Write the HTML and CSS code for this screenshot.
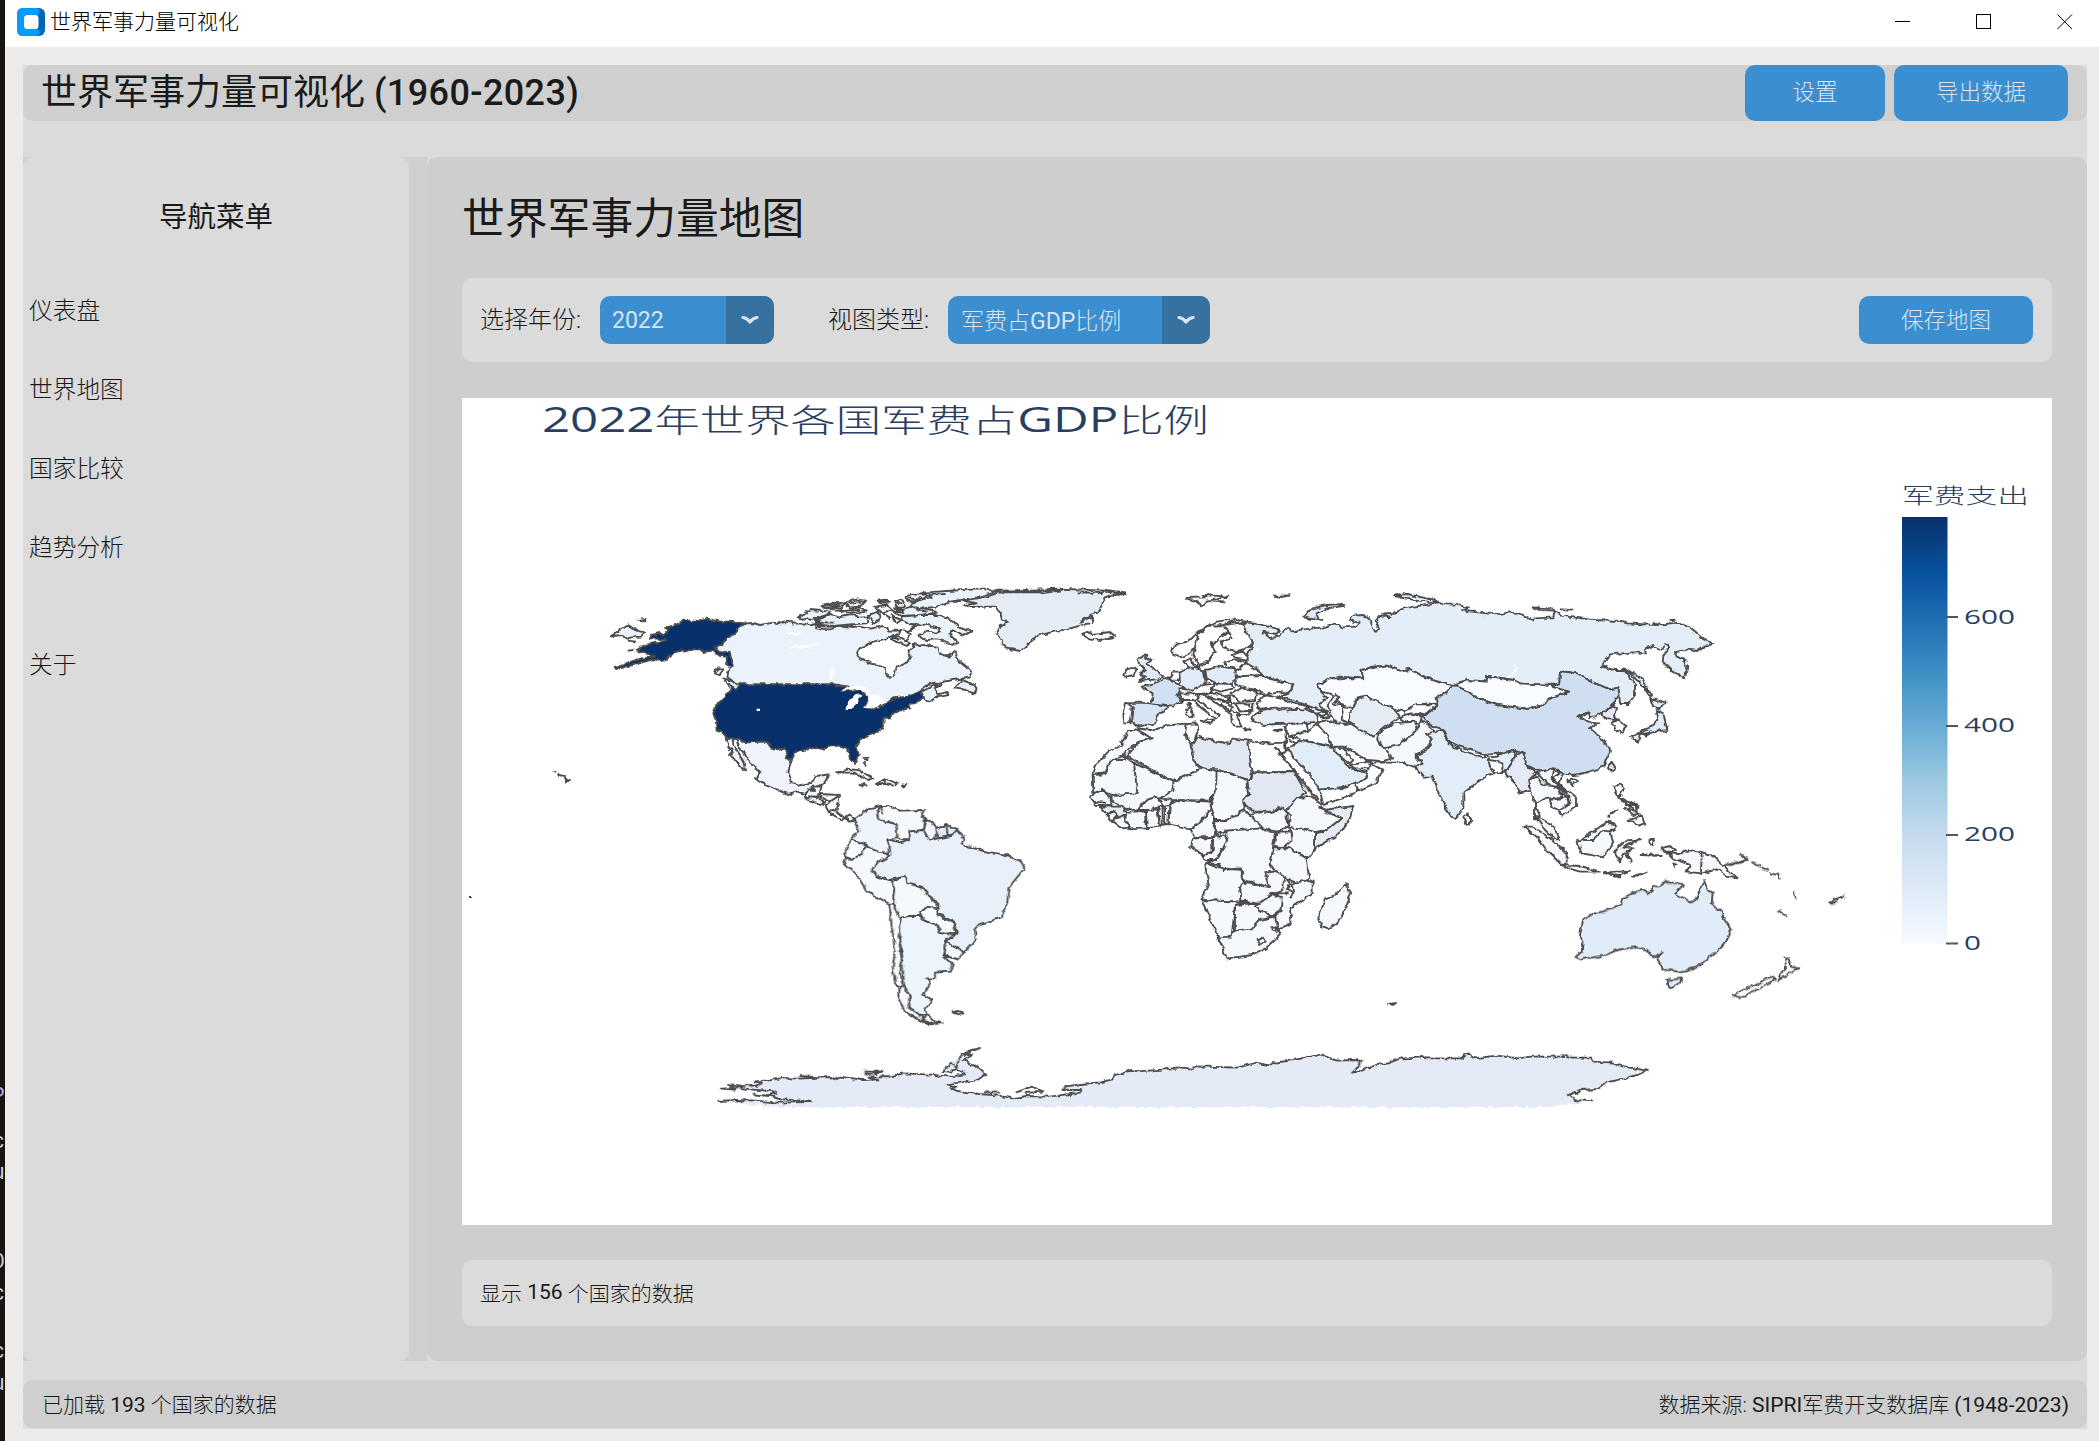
FILE: index.html
```html
<!DOCTYPE html>
<html lang="zh-CN">
<head>
<meta charset="utf-8">
<title>世界军事力量可视化</title>
<link rel="stylesheet" href="styles.css">
</head>
<body>
<div class="desktop">
  <div class="terminal" aria-hidden="true">
    <span class="frag f1">P</span><span class="frag f2">c</span><span class="frag f3">u</span><span class="frag f4">0</span><span class="frag f5">c</span><span class="frag f6">c</span><span class="frag f7">u</span>
  </div>
  <div class="window">
    <header class="titlebar">
      <svg class="app-icon" viewBox="0 0 28 28"><rect width="28" height="28" rx="6" fill="#0065b3"/><path d="M6 0H20Q23 1 22.500 5L21 6V22L23 24Q23 27 20 28H6Q0 28 0 22V6Q0 0 6 0Z" fill="#009dff"/><rect x="7" y="7" width="14.500" height="14" rx="3.500" fill="#fff"/></svg>
      <span class="window-title">世界军事力量可视化</span>
      <svg class="window-controls" viewBox="0 0 178 16" fill="none" stroke="#000" stroke-width="1"><path d="M0 7.500H15"/><rect x="81.500" y=".5" width="14" height="14"/><path d="M162.500 .5L177 15M177 .5L162.500 15"/></svg>
    </header>
    <div class="frame">
      <div class="topbar">
        <h1>世界军事力量可视化 <b>(1960-2023)</b></h1>
        <button class="btn btn-settings">设置</button>
        <button class="btn btn-export">导出数据</button>
      </div>
      <div class="main">
        <nav class="sidebar">
          <h2>导航菜单</h2>
          <a>仪表盘</a><a>世界地图</a><a>国家比较</a><a>趋势分析</a><a class="about">关于</a>
        </nav>
        <div class="content-wrap">
        <section class="content">
          <h2>世界军事力量地图</h2>
          <div class="controls">
            <label>选择年份:</label>
            <div class="select year"><span>2022</span><i><svg viewBox="0 0 18 12"><path d="M2 3.500Q6 4 9 8Q12 4 16 3.500" /></svg></i></div>
            <label class="second">视图类型:</label>
            <div class="select kind"><span>军费占<b>GDP</b>比例</span><i><svg viewBox="0 0 18 12"><path d="M2 3.500Q6 4 9 8Q12 4 16 3.500" /></svg></i></div>
            <button class="btn btn-save">保存地图</button>
          </div>
          <svg class="map" viewBox="462 398 1590 827">
            <defs>
              <linearGradient id="blues" x1="0" y1="0" x2="0" y2="1"><stop offset="0" stop-color="#08306b"/><stop offset=".125" stop-color="#08519c"/><stop offset=".25" stop-color="#2171b5"/><stop offset=".375" stop-color="#4292c6"/><stop offset=".5" stop-color="#6baed6"/><stop offset=".625" stop-color="#9ecae1"/><stop offset=".75" stop-color="#c6dbef"/><stop offset=".875" stop-color="#deebf7"/><stop offset="1" stop-color="#f7fbff"/></linearGradient>
              <filter id="coast" filterUnits="userSpaceOnUse" x="462" y="570" width="1590" height="560" color-interpolation-filters="sRGB"><feTurbulence type="fractalNoise" baseFrequency=".16" numOctaves="2" seed="4" result="n"/><feDisplacementMap in="SourceGraphic" in2="n" scale="5" xChannelSelector="R" yChannelSelector="G"/></filter>
            </defs>
            <rect x="462" y="398" width="1590" height="827" fill="#fff"/>
            <text class="chart-title" transform="translate(542 432) scale(1.410 1)" textLength="473" lengthAdjust="spacingAndGlyphs">2022<tspan class="han">年世界各国军费占</tspan>GDP<tspan class="han">比例</tspan></text>

            <g filter="url(#coast)">
            <!-- North America -->
            <g class="land" transform="translate(540 560) scale(.33333)">
              <path class="c-can" d="M615 190L640 189L660 195L700 188L720 190L740 185L760 191L790 190L810 196L828 192L825 205L870 208L900 199L940 204L960 200L990 206L1030 198L1050 212L1085 212L1072 222L1060 230L1030 238L1000 245L970 258L948 278L960 298L1000 312L1035 320L1036 340L1050 353L1065 343L1070 320L1100 308L1112 288L1105 275L1120 262L1118 252L1140 258L1165 252L1180 262L1195 262L1200 282L1225 290L1242 272L1255 300L1280 320L1297 338L1290 352L1240 360L1205 366L1160 376L1125 400L1150 392L1180 378L1205 373L1187 385L1190 403L1225 396L1222 406L1190 412L1165 427L1150 415L1145 400L1125 406L1105 412L1080 413L1055 420L1040 430L1010 432L975 447L960 405L925 380L885 373L597 373L590 388L580 375L562 350L568 325L578 316L568 275L545 278L525 268Z"/>
              <path class="c-usa" d="M615 190L525 268L545 278L568 275L575 300L578 318L562 316L560 290L540 288L518 272L490 276L480 268L460 268L435 278L430 270L400 278L385 288L380 298L365 303L340 297L290 312L228 327L224 321L290 300L345 287L325 282L300 278L290 268L315 255L350 248L378 237L330 235L335 225L360 219L370 226L385 212L378 202L410 194L430 182L480 181L500 176L540 184L580 186Z"/>
              <path class="c-usa" d="M597 373L885 373L890 378L925 380L905 394L945 388L970 398L987 410L975 440L1000 447L1040 430L1060 415L1105 410L1120 404L1140 390L1152 412L1130 428L1108 432L1111 445L1065 455L1050 472L1030 476L1032 500L1015 515L985 528L955 543L950 560L957 590L945 609L930 598L924 565L900 557L865 560L850 569L830 562L800 568L765 578L755 600L740 592L734 565L712 571L695 565L680 545L625 547L595 538L560 533L550 520L530 512L527 480L520 460L530 435L550 415L572 395L575 380Z"/>
              <path class="lake" d="M900 394Q940 368 985 385L990 397L960 395L945 388ZM920 447Q925 405 960 403L970 406Q948 420 940 447ZM975 398L1020 408L1030 425L1045 425L1000 445L972 445L988 425ZM728 222L790 216L770 228ZM742 262L840 248L780 268ZM862 330L885 325L878 362ZM785 283L825 279L800 285ZM855 300L870 290L862 301ZM650 446H660V454H650Z"/>
              <path class="c-can" d="M211 230L265 195L290 212L315 218L300 230L270 233L260 238L245 225ZM295 180L320 176L315 181ZM265 242L290 245ZM265 272L280 270M525 340L535 325L548 325L540 345ZM550 355L575 362L597 380L590 388L570 375ZM1240 385L1265 360L1300 372L1310 385L1303 400L1280 390ZM1165 372L1190 367"/>
              <path class="c-can" d="M773 173L810 150L870 155L860 165L815 180ZM825 180L870 165L900 172L930 165L960 170L985 168L980 190L930 193L880 198L825 193L850 188ZM845 140L880 128L915 130L900 145L860 145ZM915 128L950 118L975 122L960 140L930 142ZM890 152L960 145L980 155L940 160ZM985 165L1015 155L1020 180L1000 192ZM1010 122L1045 118L1050 128L1020 130ZM1005 140L1040 135L1060 150L1025 158ZM1065 125L1085 118L1095 140L1075 145ZM1060 155L1120 142L1180 150L1190 158L1140 165L1085 168ZM1095 112L1115 104L1160 103L1175 112L1130 122L1110 125ZM1125 125L1160 110L1150 98L1220 93L1310 88L1385 92L1310 112L1230 125L1190 140L1150 145L1110 140ZM1055 168L1070 190L1085 180ZM1085 170L1140 165L1200 165L1245 185L1255 200L1297 213L1270 228L1240 212L1225 222L1255 245L1240 258L1215 245L1190 238L1160 240L1135 228L1155 215L1195 218L1200 205L1165 195L1110 192L1090 182ZM1050 238L1075 228L1110 248L1100 258L1070 245Z"/>
              <path fill="none" d="M1110 212L1140 192M1100 215L1130 190M850 136L905 134M858 142L895 140M925 130L965 125M900 150L960 152M825 186L880 188M830 198L890 201L940 198M880 132L900 138M1015 126L1045 124M1020 150L1035 165M1030 162L1050 175M1070 128L1085 130M1070 135L1088 155M1060 140L1080 150M1060 150L1090 160M1130 150L1160 155M1100 115L1140 118M1160 105L1220 102M1090 210L1110 220L1100 240M1055 232L1085 240"/>
              <path class="c-gre" d="M1560 92L1505 100L1500 96L1380 97L1340 110L1270 122L1310 130L1275 135L1290 141L1365 140L1382 160L1385 175L1405 188L1380 195L1370 215L1385 250L1400 265L1440 273L1460 255L1485 230L1530 218L1590 205L1655 188L1660 180L1620 185L1645 170L1680 152L1690 120L1694 112L1756 100L1690 92L1560 86L1390 92Z"/>
              <path class="c-mex" d="M560 533L595 538L603 545L625 547L680 545L695 565L712 571L734 565L740 592L755 600L745 635L755 665L780 676L815 668L827 648L868 643L860 660L845 675L828 680L810 690L795 702L770 694L745 702L715 692L680 677L650 658L658 640L640 615L620 600L608 575L598 565L590 542L578 538L580 555L600 585L610 605L615 628L600 622L590 602L570 585L580 575L565 560Z"/>
              <path d="M795 710L805 688L825 690L815 680L845 680L840 700L830 715ZM835 702L900 705L870 725L845 712ZM795 712L835 712L855 728L850 735L800 718ZM858 738L880 718L900 706L890 752L865 750ZM862 752L890 755L915 775L905 778L870 760ZM915 775L930 766L950 775L970 765L975 780L945 775L930 782Z"/>
              <path d="M888 638L930 627L960 632L1000 655L985 660L940 638ZM1005 672L1040 657L1070 670L1060 677L1035 672ZM958 675L980 676L970 681ZM1035 660L1040 675M1085 673L1102 675L1090 679ZM968 593L988 594M970 606L978 616M972 600L985 600"/>
              <path class="c-usa" d="M40 637L50 637M55 643L70 648M66 646L78 656M75 656L90 662L78 668Z"/>
            </g>

            <!-- South America -->
            <g class="land" transform="translate(800 760) scale(.33333)">
              <path class="c-col" d="M160 180L180 165L205 145L245 138L230 155L235 180L290 192L292 235L265 238L268 290L230 275L200 255L155 238L178 212Z"/>
              <path class="c-per" d="M245 138L265 138L300 152L372 150L365 168L378 175L370 210L325 215L328 238L292 235L290 192L235 180L232 158ZM372 175L410 200L405 235L388 242L370 210L378 190Z"/>
              <path d="M155 238L200 255L185 282L155 300L135 290L140 260ZM240 135L250 160"/>
              <path class="c-per" d="M135 293L155 300L185 282L202 258L230 275L262 278L265 295L235 305L215 330L235 350L270 360L280 370L280 430L268 432L200 392L170 345L130 305Z"/>
              <path class="c-aus" d="M405 205L440 195L475 208L490 238L455 228L415 235ZM440 198L443 230"/>
              <path class="c-bra" d="M268 290L265 238L300 247L328 240L325 215L370 210L388 242L415 235L455 228L470 210L495 240L485 250L510 262L560 275L610 283L660 302L673 325L645 360L625 385L622 430L605 472L540 492L525 510L527 540L492 578L440 545L470 515L465 488L430 470L412 460L415 432L380 405L378 388L325 370L315 350L270 360L235 350L215 330L235 305Z"/>
              <path class="c-per" d="M275 360L315 350L325 370L378 388L380 405L412 430L412 445L375 445L360 468L320 472L302 475L280 430L285 395Z"/>
              <path d="M360 455L380 440L410 445L415 468L460 490L468 518L440 525L415 518L420 500L365 475Z"/>
              <path class="c-arg" d="M302 475L320 468L360 468L365 475L420 500L415 518L440 525L468 518L437 545L430 585L458 612L450 632L405 635L405 655L380 655L392 670L370 705L395 718L375 750L385 765L355 765L325 740L330 710L312 675L305 570L298 545L300 500Z"/>
              <path d="M437 545L492 578L470 597L430 585ZM268 432L280 430L302 475L300 500L298 545L305 600L300 640L312 675L328 710L325 740L355 762L375 780L400 790L355 780L315 755L295 715L295 680L285 670L278 620L285 570L275 500ZM365 775L385 765L405 785L425 790L390 793L345 775L325 762M288 675L310 680L300 690"/>
              <path d="M458 758L475 753L490 757L475 763Z"/>
            </g>

            <!-- Europe and Africa -->
            <g class="land" transform="translate(1060 560) scale(.33333)">
              <path class="c-none" d="M70 222L85 216L100 222L150 216L165 228L120 243L85 238ZM375 114L440 112L430 105L505 110L470 118L440 122L425 136L400 122ZM455 125L493 127M640 107L690 106L665 111ZM1000 108L1020 102"/>
              <path class="c-none" d="M130 95L195 101L140 108M50 97L130 99M65 182L100 170L95 190"/>
              <path class="c-aus" d="M730 172L755 145L800 135L850 132L852 138L800 145L770 160L775 178L790 183Z"/>
              <path class="c-none" d="M335 265L350 252L385 245L420 212L470 185L520 178L560 185L545 192L520 185L490 195L440 198L415 225L405 262L390 280L360 292L340 285ZM405 262L415 225L440 198L490 195L505 215L480 235L455 250L465 275L440 308L415 315L400 285ZM490 195L540 188L560 205L580 250L560 265L530 275L490 262L485 245L515 235L505 215Z"/>
              <path class="c-none" d="M370 305L395 295L400 315L420 322L390 325ZM515 285L545 275L565 285L560 300L525 292ZM495 305L520 298L560 305L550 318L530 330L500 320ZM520 345L545 315L580 312L610 345L570 350Z"/>
              <path class="c-aus" d="M240 290L262 285L258 295L272 303L260 312L285 330L308 350L290 358L238 363L258 350L240 345L258 330L240 315L232 300Z"/>
              <path class="c-none" d="M190 345L195 330L225 320L232 330L222 345L195 350ZM325 355L340 335L360 335L355 360L335 358Z"/>
              <path class="c-aus" d="M358 335L390 322L430 330L440 365L425 385L380 390L360 372ZM435 330L480 320L525 325L528 355L515 372L465 368L440 355Z"/>
              <path class="c-fra" d="M245 380L275 375L300 362L320 355L368 378L360 395L352 410L370 425L340 437L275 430L278 400Z"/>
              <path class="c-esp" d="M195 430L240 428L275 430L330 440L295 465L285 490L235 500L212 480L218 440Z"/>
              <path class="c-none" d="M195 430L218 440L212 490L190 490L187 465ZM355 400L400 400L420 410L410 420L440 440L480 465L465 475L425 445L400 420L365 420ZM425 482L460 478L450 492ZM378 450L395 445L398 468L382 470ZM382 432L390 432L388 445ZM355 385L395 390L430 375L465 370L455 398L420 402L360 400ZM465 370L515 372L520 385L480 395L455 385ZM430 405L470 400L510 410L515 445L490 440L460 425ZM445 410L485 440L510 465L525 500L545 500L530 465L560 465L580 450L560 430L520 430ZM510 400L550 382L590 395L585 420L540 425ZM530 350L600 345L645 360L700 375L690 395L650 415L610 400L590 390L545 382L525 372ZM525 430L580 430L580 452L540 455ZM548 507L575 510M640 510L665 508L655 514Z"/>
              <path class="c-none" d="M490 408L510 418L500 432L520 445M470 415L500 425M480 430L510 455L520 440M515 450L540 462M590 400L610 403L640 400L680 395M645 415L690 402"/>
              <path class="c-gre" d="M575 470L600 455L640 445L680 452L730 445L765 460L775 485L720 490L650 492L610 495L580 480Z"/>
              <path class="c-none" d="M590 430L610 405L650 412L700 430L750 440L730 448L650 442L600 450ZM730 432L780 445L800 460L790 472L765 460L750 448ZM765 462L800 455L810 470L790 475Z"/>
              <path class="c-per" d="M185 548L205 515L235 505L272 510L275 535L240 545L200 570L190 590L165 595L155 615L128 640L98 645L110 610L145 575L185 555Z"/>
              <path class="c-per" d="M225 505L272 510L310 498L380 490L395 495L375 520L395 545L400 600L425 625L340 665L200 588L240 545L275 535Z"/>
              <path class="c-none" d="M380 492L410 490L412 520L395 555L375 520Z"/>
              <path class="c-lib" d="M395 555L412 530L450 540L510 552L515 535L565 542L575 635L565 665L470 628L425 625L400 600Z"/>
              <path class="c-none" d="M565 542L620 550L675 548L678 575L665 580L645 562L705 635L575 637Z"/>
              <path class="c-per" d="M98 645L135 643L155 600L195 600L195 590L222 610L232 700L155 705L125 690L100 700ZM222 608L340 665L340 690L300 715L260 720L230 750L190 745L155 720L155 705L232 700ZM340 665L425 625L470 630L468 690L450 722L340 720L300 715L340 690ZM470 628L565 660L568 705L550 720L555 750L500 780L465 780L450 740L468 690Z"/>
              <path class="c-lib" d="M575 637L705 637L740 700L710 715L680 750L655 740L640 755L580 755L550 730L550 715L568 705L562 665L575 655Z"/>
              <path class="c-per" d="M90 710L125 690L150 710L155 735L105 735ZM98 725L135 728M230 750L260 720L290 710L310 735L270 750Z"/>
              <path class="c-gre" d="M120 740L190 740L200 765L180 775L160 755L140 762Z"/>
              <path class="c-per" d="M140 765L155 755L170 770L155 785ZM165 780L190 765L210 805L190 808L155 785ZM200 755L255 755L258 805L210 808L195 780ZM258 750L292 748L300 800L260 805ZM330 730L350 720L450 725L455 745L425 780L395 808L370 805L325 792Z"/>
              <path class="c-gre" d="M295 740L328 735L325 792L300 795ZM308 740V795M315 740V795"/>
              <path class="c-per" d="M455 745L465 780L460 800L475 830L405 832L392 808L430 780ZM465 785L500 780L555 750L570 765L610 805L550 810L500 812L465 825ZM570 765L610 755L640 758L670 740L690 770L685 800L650 815L610 805ZM680 750L710 715L755 710L790 735L775 745L845 775L800 810L740 820L690 800L680 775Z"/>
              <path class="c-gre" d="M775 740L790 750L880 738L870 775L840 820L765 865L765 820L800 810L845 775Z"/>
              <path class="c-per" d="M400 835L455 835L458 875L430 885L390 860ZM460 832L500 825L495 860L470 900L435 900L425 885L458 875ZM500 812L610 805L645 820L635 890L632 915L645 935L620 938L620 970L632 982L550 960L545 930L490 925L435 910L470 898L495 860ZM435 910L480 912L490 930L540 925L548 965L570 965L565 980L540 982L545 1025L425 1020L445 970ZM650 815L690 815L695 840L670 865L640 860ZM690 800L765 815L765 870L745 895L690 865L670 862L695 840ZM640 865L690 865L740 895L748 960L715 970L675 955L645 935L632 910Z"/>
              <path class="c-per" d="M548 968L632 982L620 970L620 938L645 935L672 945L670 990L635 1000L600 1028L545 1022L540 985ZM600 1028L635 1005L668 1015L665 1050L635 1070L585 1040ZM748 960L758 965L758 1000L690 1045L695 1090L655 1105L645 1070L665 1050L668 1015L640 1000L700 1000L695 970ZM425 1020L540 1025L600 1028L525 1035L515 1130L475 1132L440 1055ZM525 1032L580 1025L585 1040L635 1072L600 1080L575 1105L525 1112ZM475 1132L515 1130L525 1112L575 1105L600 1080L645 1070L655 1105L660 1125L620 1165L580 1185L500 1195L488 1165ZM590 1142L605 1133L618 1142L600 1155ZM635 1105L650 1102L650 1120Z"/>
              <path class="c-per" d="M670 945L690 970L680 990L700 1000L690 1015M775 1075L795 1015L825 1005L860 970L872 1005L835 1090L805 1105L785 1098Z"/>
              <path class="c-none" d="M680 492L740 490L745 510L690 530L680 515ZM675 530L690 540L708 550L680 575ZM690 530L745 512L775 485L800 520L815 560L725 540Z"/>
              <path class="c-ind" d="M685 565L725 540L770 550L825 565L850 600L870 625L920 635L915 660L840 685L780 690L755 650L705 600Z"/>
              <path class="c-none" d="M780 688L840 685L885 670L895 690L860 710L790 735ZM885 670L915 660L930 610L970 630L945 670L895 692ZM815 562L850 565L880 600L870 610L830 580ZM870 615L930 605L925 625L880 625Z"/>
              <path class="c-per" d="M770 490L800 480L830 490L880 490L950 495L960 540L1000 575L985 605L920 600L850 560L820 560L800 525Z"/>
              <path fill="none" d="M675 500L680 570M645 562L705 635L755 700L790 735"/>
            </g>

            <!-- Asia -->
            <g class="land" transform="translate(1380 570) scale(.33333)">
              <path class="c-rus" d="M-410 165L-400 158L-360 163L-300 178L-310 192L-350 186L-330 204L-305 200L-275 170L-265 184L-230 178L-170 172L-135 160L-115 172L-70 170L-60 160L-90 148L-75 133L-50 132L-30 150L-15 188L-5 175L-15 155L0 138L30 142L10 130L50 128L60 118L100 110L160 102L175 95L200 103L230 104L270 114L250 122L320 130L350 133L390 127L430 137L460 152L465 145L520 142L525 122L545 137L640 150L720 153L740 160L830 165L890 158L930 172L970 204L960 203L1000 222L975 227L950 243L920 238L885 247L890 260L915 270L922 290L915 325L880 305L848 275L850 255L868 232L855 222L848 240L820 228L798 235L800 250L760 247L690 253L665 288L700 300L735 300L765 340L765 375L745 402L720 402L718 370L715 352L690 358L640 338L590 310L540 303L538 340L510 345L420 340L400 330L322 318L320 335L260 330L222 345L180 338L130 320L90 297L60 302L20 287L-20 290L-55 300L-50 325L-120 320L-150 325L-188 345L-180 365L-160 385L-180 400L-170 425L-235 400L-300 380L-275 370L-260 345L-330 325L-360 310L-365 300L-400 280L-400 260L-380 220L-400 190Z"/>
              <path class="lake" d="M-378 240L-360 235L-372 245ZM-345 225L-330 235ZM380 320Q405 315 405 285Q425 305 385 325Z"/>
              <path class="c-rus" d="M42 78L80 72L165 90L175 98L110 92ZM460 112L520 115L525 122L480 120ZM540 118L580 119M872 150L886 149M820 158L835 165M735 295L790 330L803 350L790 350L760 320Z"/>
              <path class="c-kaz" d="M-188 345L-150 325L-50 325L-55 300L20 287L60 302L90 297L130 320L180 338L222 345L200 365L170 385L180 400L110 402L70 425L40 415L0 398L-40 380L-70 385L-80 415L-120 405L-150 370L-180 365Z"/>
              <path class="c-gre" d="M-90 430L-80 415L-70 388L-40 380L0 398L40 415L60 440L10 475L-20 500L-60 480L-95 455Z"/>
              <path class="c-kaz" d="M70 425L110 402L175 403L130 435L100 430L75 435ZM60 445L95 430L125 440L120 462L75 455ZM-140 400L-110 410L-115 450L-90 462L-130 460L-160 410L-135 375L-120 380Z"/>
              <path class="c-per" d="M-5 490L40 460L105 455L110 480L60 525L10 535L-5 510ZM10 535L60 525L110 480L125 450L165 485L155 515L110 560L130 590L100 590L70 578L-15 578L40 565Z"/>
              <path class="c-kaz" d="M222 345L260 330L320 335L322 318L400 330L420 340L510 345L520 350L565 365L500 390L490 405L445 417L350 405L290 383L265 365Z"/>
              <path class="c-chn" d="M130 440L175 405L170 385L222 345L265 365L290 383L350 405L445 417L490 405L500 390L568 365L515 350L538 340L540 303L590 310L640 338L690 358L715 352L718 375L700 400L665 430L630 445L628 425L595 440L625 458L655 460L630 475L670 510L690 540L670 590L620 608L580 615L550 610L520 595L480 605L440 585L430 550L395 540L350 555L315 552L260 540L220 520L200 510L190 480L150 465Z"/>
              <path class="c-chn" d="M565 632L580 625L593 632L580 645ZM683 590L695 575L706 592L698 607Z"/>
              <path class="c-ind" d="M165 485L190 480L200 510L225 535L315 555L350 555L400 540L410 552L385 590L375 605L345 610L320 615L250 670L250 715L228 747L210 735L180 680L155 620L130 620L105 590L130 585L110 555L135 545L158 510L140 490Z"/>
              <path class="c-none" d="M220 530L240 530L315 552L315 562L270 552ZM320 552L350 548L355 560L325 562ZM325 568L370 580L370 605L345 610L330 590ZM250 740L265 730L277 752L262 767Z"/>
              <path class="c-mya" d="M410 552L430 550L440 585L470 610L445 630L450 660L415 668L405 640L375 610L385 590Z"/>
              <path class="c-per" d="M445 630L470 620L490 645L535 650L545 680L510 685L480 690L465 700L480 740L465 745L465 700L450 660ZM470 608L520 595L540 610L515 625L560 665L560 685L535 655L500 640ZM520 595L550 610L535 640L588 680L588 710L545 740L535 720L565 705L565 680L530 640L515 620ZM510 690L560 682L570 700L535 720L515 710Z"/>
              <path class="c-per" d="M465 740L490 750L520 770L540 808L525 808L495 780ZM433 770L460 770L510 805L560 850L560 880L545 885L500 840L470 800ZM550 885L600 888L660 905L600 905L555 892ZM592 812L605 810L660 770L685 755L710 770L690 785L700 815L670 862L605 850ZM605 810L640 810L670 782L690 785M715 830L730 815L780 810L750 822L730 830L760 835L740 845L755 875L735 850L730 850L720 878L705 850Z"/>
              <path class="c-none" d="M675 910L700 905L750 905L720 915ZM755 920L800 906L770 920ZM700 915L720 920M785 855L845 858L815 853ZM805 810L822 810L815 830ZM880 880L890 884L883 890ZM683 740L710 715M703 648L725 643L730 660L718 680L705 670ZM715 680L775 710L770 725L730 695ZM735 715L780 730L760 735ZM740 750L765 745L785 735L793 760L775 767L760 755ZM730 690L760 700L745 720M735 705L765 705L775 720"/>
              <path class="c-per" d="M845 835L870 828L888 840L870 850ZM865 850L895 852L930 840L965 850L963 910L920 905L930 885L880 865ZM965 850L1000 858L1035 890L1070 925L1040 920L1010 898L963 912Z"/>
              <path class="c-mya" d="M668 430L700 405L712 412L705 435L710 450L685 448L670 440Z"/>
              <path class="c-none" d="M695 460L715 448L740 470L725 488L708 480Z"/>
              <path class="c-aus" d="M820 410L810 385L860 398L835 415ZM830 420L850 430L862 480L830 485L790 495L775 487L815 470L835 450ZM753 497L780 490L775 518L758 508ZM785 490L810 485L800 497ZM790 350L820 375L810 380Z"/>
            </g>

            <!-- Oceania -->
            <g class="land" transform="translate(1500 760) scale(.33333)">
              <path class="c-aus" d="M228 590L245 575L248 545L240 525L250 480L270 465L340 445L365 430L370 415L395 400L425 390L445 402L460 380L480 378L495 362L520 372L550 375L525 400L575 427L590 415L612 360L625 390L638 398L635 430L665 455L670 475L692 505L680 540L650 575L590 622L540 635L488 628L480 605L470 598L485 575L460 595L445 570L410 562L360 568L310 587L245 598ZM502 660L550 655L530 675L508 683Z"/>
              <path d="M855 592L868 600L870 620L898 625L870 640L835 660L840 640L858 625ZM698 705L740 685L815 650L825 658L780 685L720 712ZM675 315L720 305L742 292L725 310L695 315ZM718 280L745 300M757 306L780 318M785 322L810 330M810 340L835 345L840 358M880 395L890 413M833 450L862 470M990 430L1010 425L1000 433ZM1010 420L1035 408"/>
            </g>

            <!-- Antarctica -->
            <g class="land" transform="translate(700 1020) scale(.625 .33333)">
              <path class="ice" d="M28 243L90 242L178 246L125 237L87 224L120 221L105 212L35 206L90 195L92 182L130 174L200 172L260 180L285 178L268 165L330 162L400 168L420 160L395 145L402 130L425 95L448 84L425 105L425 125L458 160L440 182L400 193L410 212L445 222L500 235L550 228L608 218L580 205L610 192L660 178L680 155L740 145L850 140L895 128L910 135L950 120L995 103L1015 118L1058 122L1045 158L1080 135L1120 115L1215 115L1230 102L1245 113L1275 107L1310 115L1385 105L1425 113L1430 125L1475 135L1515 152L1500 165L1450 188L1440 207L1400 215L1390 230L1405 243L1430 244L1355 261H110Z"/>
              <path fill="none" d="M28 243L60 240L90 242L125 248L178 246L160 242L125 237L115 229L87 224L105 226L120 221L120 214L80 208L60 201L55 209L35 206L55 204L45 195L65 200L75 195L90 198L98 188L88 184L110 181L130 174L160 176L210 171L215 178L225 170L260 180L285 178L268 170L310 168L325 160L370 164L400 170L425 163L415 150L400 155L388 153L402 130L410 145L415 110L430 93L448 84L440 90L425 105L435 105L420 120L440 135L458 165L440 182L395 193L410 200L400 205L410 212L445 222L475 226L500 235L520 228L560 230L608 218L608 210L580 210L585 200L610 192L640 187L660 178L665 165L680 157L690 150L700 154L740 149L765 142L790 146L800 139L860 143L890 128L910 136L920 128L950 120L995 103L1005 114L1020 122L1045 120L1058 122L1055 138L1042 158L1055 155L1080 135L1100 130L1120 116L1150 113L1155 107L1160 115L1215 115L1230 100L1238 115L1275 107L1310 115L1330 110L1380 110L1387 102L1388 113L1425 113L1430 125L1460 128L1475 138L1515 152L1500 165L1450 188L1437 207L1410 210L1390 225L1400 240L1430 244M160 168L195 172M262 155L292 155L275 162L262 160M455 217L480 218M507 217L530 200L548 215L520 219"/>
            </g>
            <g class="land" transform="translate(462 398)"><path d="M7 499L11 499M926 606L934 605L931 607ZM1370 502L1382 499"/></g>
            </g>

            <text class="bar-title" x="1902" y="503" textLength="127" lengthAdjust="spacingAndGlyphs">军费支出</text>
            <rect x="1902" y="517" width="45.500" height="427" fill="url(#blues)"/>
            <path d="M1946 617H1958M1946 726H1958M1946 835H1958M1946 943.500H1958" stroke="#555" stroke-width="1.800"/>
            <g class="ticks">
              <text x="1964" y="624" textLength="51" lengthAdjust="spacingAndGlyphs">600</text>
              <text x="1964" y="732" textLength="51" lengthAdjust="spacingAndGlyphs">400</text>
              <text x="1964" y="841" textLength="51" lengthAdjust="spacingAndGlyphs">200</text>
              <text x="1964" y="950" textLength="17" lengthAdjust="spacingAndGlyphs">0</text>
            </g>
          </svg>
          <div class="info">显示 <b>156</b> 个国家的数据</div>
        </section>
        </div>
      </div>
      <footer class="status"><span>已加载 <b>193</b> 个国家的数据</span><span>数据来源: <b>SIPRI</b>军费开支数据库 <b>(1948-2023)</b></span></footer>
    </div>
  </div>
</div>
</body>
</html>
```
FILE: styles.css
```css
* { box-sizing: border-box; }
body { margin: 0; font-family: Roboto, "Noto Sans CJK SC", sans-serif; font-weight: 300; color: #1a1a1a; }
h1, h2 { margin: 0; font-weight: 400; white-space: nowrap; }
b { font-weight: 400; }
.desktop { display: flex; width: 2099px; height: 1441px; overflow: hidden; }
.terminal { position: relative; flex: none; width: 5px; background: #171412; overflow: hidden; }
.frag { position: absolute; right: 0; font: 22px/24px "Liberation Mono", monospace; color: #ccc; }
.f1 { top: 1085px; color: #b9a6e0; }
.f2 { top: 1131px; }
.f3 { top: 1162px; }
.f4 { top: 1251px; }
.f5 { top: 1283px; }
.f6 { top: 1341px; }
.f7 { top: 1373px; }
.window { flex: 1; display: flex; flex-direction: column; background: #ebebeb; }
.titlebar { flex: none; height: 47px; display: flex; align-items: center; background: #fff; padding: 0 26px 4px 12px; }
.app-icon { width: 28px; height: 28px; margin-right: 5px; }
.window-title { font-size: 21px; line-height: 30px; color: #000; }
.window-controls { width: 178px; height: 16px; margin-left: auto; }
.frame { margin: 18px 12px 12px 18px; flex: 1; display: flex; flex-direction: column; background: #dbdbdb; }
.topbar { height: 56px; flex: none; display: flex; align-items: center; gap: 9px; background: #cfcfcf; border-radius: 10px; padding: 0 19px 0 18px; }
.topbar h1 { font-size: 36px; line-height: 54px; margin-right: auto; }
.topbar h1 b { font-weight: 500; letter-spacing: .4px; }
.btn { flex: none; border: 0; border-radius: 10px; background: #3b8ed0; color: #dce4ee; font: inherit; font-size: 22.500px; padding: 0 0 5px; }
.btn-settings { width: 140px; height: 56px; padding-bottom: 7px; }
.btn-export { width: 174px; height: 56px; padding-bottom: 7px; }
.btn-save { width: 174px; height: 48px; margin-left: auto; }
.main { display: flex; height: 1204px; margin-top: 36px; background: #cfcfcf; }
.sidebar { flex: none; width: 386px; display: flex; flex-direction: column; background: #dbdbdb; border-radius: 10px; padding: 39px 6px 0; }
.sidebar h2 { text-align: center; font-size: 28.500px; line-height: 44px; margin-bottom: 32px; }
.sidebar a { font-size: 23.700px; line-height: 79px; height: 79px; }
.sidebar .about { margin-top: 38px; }
.content-wrap { margin-left: 18px; flex: 1; background: #dbdbdb; }
.content { height: 100%; background: #cecece; border-radius: 10px; padding: 33px 35px 35px; display: flex; flex-direction: column; }
.content h2 { font-size: 42.800px; line-height: 58px; height: 88px; }
.controls { flex: none; height: 84px; display: flex; align-items: center; background: #dbdbdb; border-radius: 10px; padding: 0 19px 0 18px; }
.controls label { font-size: 24px; line-height: 36px; width: 120px; white-space: nowrap; }
.controls .second { margin-left: 54px; }
.select { height: 48px; display: flex; align-items: center; border-radius: 10px; overflow: hidden; background: #3b8ed0; color: #dce4ee; font-size: 23px; }
.year { width: 174px; }
.kind { width: 262px; }
.select span { flex: 1; padding: 0 0 3px 13px; white-space: nowrap; }
.year span { font-weight: 400; padding: 0 0 0 12px; }
.select i { width: 48px; height: 48px; background: #36719f; display: flex; align-items: center; justify-content: center; }
.select svg { width: 18px; height: 12px; fill: none; stroke: #dce4ee; stroke-width: 3.200; stroke-linecap: round; stroke-linejoin: round; }
.map { display: block; flex: none; width: 1590px; height: 827px; margin: 36px 0 35px; }
.info { height: 66px; display: flex; align-items: center; background: #dbdbdb; border-radius: 10px; padding: 0 18px 2px; font-size: 21px; white-space: pre; }
.status { flex: none; height: 48px; margin-top: 19px; display: flex; align-items: center; justify-content: space-between; background: #cfcfcf; border-radius: 10px; padding: 0 18px 2px 19px; font-size: 21px; }
.chart-title { font: 400 34.500px "Open Sans", "Noto Sans CJK SC", sans-serif; fill: #2a3f5f; }
.han { font-size: 31.800px; font-weight: 300; }
.bar-title { font: 300 21px "Noto Sans CJK SC", sans-serif; fill: #2a3f5f; }
.ticks { font: 400 20px "Open Sans", sans-serif; fill: #2a3f5f; }
.land path { stroke: #4c4c4c; stroke-width: 1.900; vector-effect: non-scaling-stroke; stroke-linejoin: round; fill: #f7fbff; }
.land .c-none { fill: #fcfdff; }
.land .c-can { fill: #eaf3fb; }
.land .c-usa { fill: #08306b; }
.land .c-gre { fill: #e5ecf6; }
.land .c-mex { fill: #f0f5fd; }
.land .c-col { fill: #eff5fd; }
.land .c-per { fill: #f5f9fe; }
.land .c-bra { fill: #e8f0fa; }
.land .c-arg { fill: #edf5fc; }
.land .c-aus { fill: #e0ecf8; }
.land .c-ind { fill: #e1edf8; }
.land .c-rus { fill: #e4eef8; }
.land .c-kaz { fill: #f8fbff; }
.land .c-chn { fill: #cfdff1; }
.land .c-fra { fill: #cfe1f2; }
.land .c-esp { fill: #d5e5f4; }
.land .c-lib { fill: #e1e8f3; }
.land .c-mya { fill: #e5e9f5; }
.land .lake { fill: #fff; stroke: none; }
.land .ice { fill: #e4ebf6; stroke: none; }
.land path[fill="none"] { fill: none; }
```
